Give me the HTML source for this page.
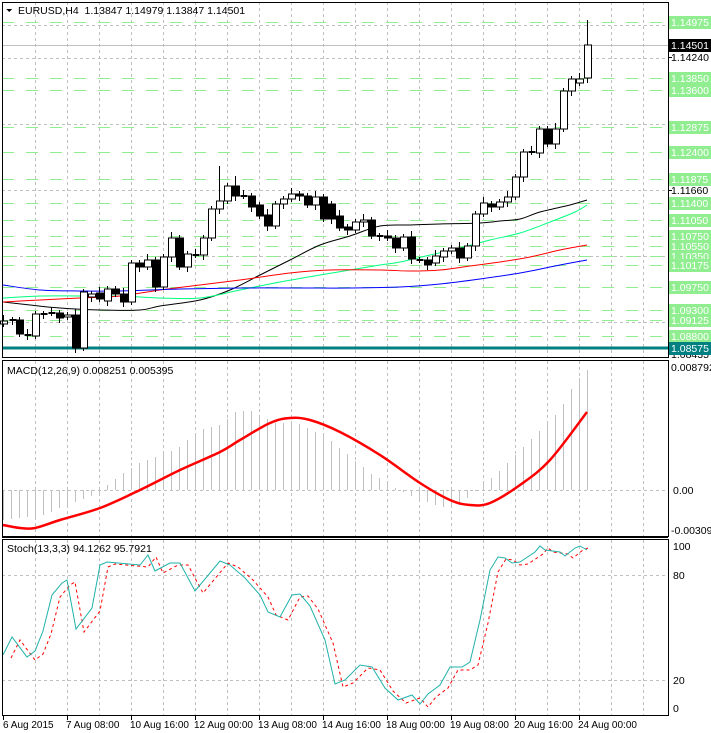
<!DOCTYPE html>
<html><head><meta charset="utf-8"><style>
html,body{margin:0;padding:0;background:#fff;width:711px;height:733px;overflow:hidden}
svg{display:block}
text{font-family:"Liberation Sans",sans-serif;font-size:10.5px}
text.b{font-size:10px}
</style></head><body>
<svg id="s" width="711" height="733" xmlns="http://www.w3.org/2000/svg" shape-rendering="crispEdges">
<rect width="711" height="733" fill="#fff"/>
<g id="g"></g>
</svg>
<script>
var G=document.getElementById('g'),h='';
function L(x1,y1,x2,y2,c,w,d){h+='<line x1="'+x1+'" y1="'+y1+'" x2="'+x2+'" y2="'+y2+'" stroke="'+c+'" stroke-width="'+(w||1)+'"'+(d?' stroke-dasharray="'+d+'"':'')+'/>';}
function P(pts,c,w,d,geo){h+='<polyline fill="none" points="'+pts.map(function(p){return p.join(',')}).join(' ')+'" stroke="'+c+'" stroke-width="'+(w||1)+'"'+(d?' stroke-dasharray="'+d+'"':'')+(geo?' shape-rendering="geometricPrecision"':'')+'/>';}
function S(pts,c,w){var d='M'+pts[0][0]+' '+pts[0][1];for(var i=1;i<pts.length;i++){var p0=pts[i-2]||pts[i-1],p1=pts[i-1],p2=pts[i],p3=pts[i+1]||p2;d+=' C'+(p1[0]+(p2[0]-p0[0])/6)+' '+(p1[1]+(p2[1]-p0[1])/6)+' '+(p2[0]-(p3[0]-p1[0])/6)+' '+(p2[1]-(p3[1]-p1[1])/6)+' '+p2[0]+' '+p2[1];}h+='<path d="'+d+'" fill="none" stroke="'+c+'" stroke-width="'+w+'" shape-rendering="geometricPrecision"/>';}
function T(x,y,s,c,a,cl){h+='<text x="'+x+'" y="'+y+'" fill="'+(c||'#000')+'"'+(a?' text-anchor="'+a+'"':'')+(cl?' class="'+cl+'"':'')+'>'+s+'</text>';}
var vx=[];for(var x=35.5;x<668;x+=32)vx.push(x);
[[2,357],[361,536],[540,715]].forEach(function(p){vx.forEach(function(x){L(x,p[0],x,p[1],'#c0c0c0',1,'3,3');});});
[25,58,124,190,256,322].forEach(function(y){L(2,y+.5,668,y+.5,'#c0c0c0',1,'3,3');});
L(2,490.5,668,490.5,'#c0c0c0',1,'3,3');
[575,680].forEach(function(y){L(2,y+.5,668,y+.5,'#c0c0c0',1,'3,3');});
var lv=[[22,'1.14975'],[78,'1.13850'],[90,'1.13600'],[127,'1.12875'],[152,'1.12400'],[179,'1.11875'],[203,'1.11400'],[220,'1.11050'],[236,'1.10750'],[246,'1.10550'],[256,'1.10350'],[265,'1.10175'],[287,'1.09750'],[310,'1.09300'],[320,'1.09125'],[336,'1.08800']];
lv.forEach(function(l){L(2,l[0]+.5,668,l[0]+.5,'#90ee90',1,'12,12');});
L(2,45.5,668,45.5,'#c0c0c0',1);
S([[3,302],[30,305],[60,308],[100,310],[140,310],[160,306],[200,300],[230,290],[260,275],[290,260],[320,245],[350,236],[380,226],[410,225],[440,224],[480,223],[500,221],[520,219],[540,212],[570,205],[587,200]],'#000',1);
S([[3,298],[40,296],[80,296],[120,296],[160,298],[200,298],[240,290],[280,282],[320,275],[350,270],[380,265],[400,262],[430,255],[460,248],[490,240],[520,233],[550,222],[575,212],[587,205]],'#00ff7f',1);
S([[3,302],[40,300],[80,298],[120,296],[160,290],[200,285],[240,280],[290,273],[330,270],[380,270],[410,271],[440,270],[470,266],[500,262],[530,257],[560,250],[587,245]],'#ff0000',1);
S([[3,285],[40,290],[80,291],[120,291],[180,289],[240,288],[300,288],[350,288],[400,287],[440,284],[480,279],[520,273],[560,265],[587,260]],'#0000ff',1);
L(2,348,668,348,'#008080',3);
var C=[[3,324,321],[12,320,320],[19,320,334],[27,335,335],[35,336,314],[43,314,314],[51,313,313],[59,313,318],[67,317,315],[75,315,348],[83,348,292],[91,297,294],[99,293,299],[107,301,289],[115,289,294],[123,294,302],[131,302,263],[139,263,267],[147,267,260],[155,260,287],[163,287,257],[171,257,238],[179,238,267],[187,267,254],[195,255,255],[203,255,238],[211,238,209],[219,209,201],[227,201,186],[235,186,196],[243,196,196],[251,196,207],[259,205,216],[267,215,226],[275,226,204],[283,204,199],[291,199,194],[299,194,196],[307,196,205],[315,205,197],[323,197,219],[331,204,219],[339,216,228],[347,227,230],[355,230,222],[363,222,220],[371,220,236],[379,236,236],[387,236,238],[395,238,248],[403,248,237],[411,237,259],[419,260,260],[427,260,265],[435,263,256],[443,257,251],[451,251,248],[459,248,258],[467,258,246],[475,246,214],[483,214,203],[491,204,207],[499,207,202],[507,202,197],[515,197,177],[523,177,152],[531,152,152],[539,153,129],[547,129,144],[555,144,129],[563,129,91],[571,91,79],[579,83,79],[587,78,45]];
C.forEach(function(c,i){var x=c[0]+.5,t=Math.min(c[1],c[2]),b=Math.max(c[1],c[2]);var hi=c[3]||t-(i%3==0?6:3),lo=c[4]||b+(i%2?5:3);if(i==C.length-1)hi=20;if(i==27)hi=166;if(i==29)hi=176;
L(x,hi,x,lo,'#000',1);if(b-t<2){L(x-3,t,x+4,t,'#000',2);}else h+='<rect x="'+(x-3)+'" y="'+t+'" width="7" height="'+(b-t)+'" fill="'+(c[2]<c[1]?'#fff':'#000')+'" stroke="#000"/>';});
var HK=[[3,520],[40,516],[80,500],[100,493],[110,482],[140,462],[175,450],[200,430],[220,425],[235,412],[250,411],[275,423],[300,424],[330,440],[350,457],[370,473],[390,485],[402,492],[420,500],[440,507],[460,505],[470,495],[500,470],[530,440],[560,410],[575,382],[587,370]];
function itp(a,x){for(var i=1;i<a.length;i++)if(x<=a[i][0]){var p=a[i-1],q=a[i];return p[1]+(q[1]-p[1])*(x-p[0])/(q[0]-p[0]);}return a[a.length-1][1];}
for(var x=3;x<=587;x+=8){var y=Math.round(itp(HK,x));L(x+.5,490,x+.5,y,'#c0c0c0',1);}
S([[3,525],[20,528],[35,528],[60,520],[100,508],[140,490],[180,470],[220,452],[240,440],[270,423],[290,418],[310,420],[340,432],[380,455],[420,483],[450,500],[470,505],[490,503],[520,485],[550,460],[587,412]],'#ff0000',2.5);
var SK=[[3,655],[12,637],[27,657],[35,651],[43,631],[52,595],[62,583],[67,580],[76,629],[92,608],[100,565],[107,562],[140,565],[148,555],[155,571],[170,563],[180,563],[195,591],[220,561],[230,565],[245,578],[260,595],[268,612],[280,617],[292,595],[300,594],[310,606],[325,640],[335,684],[345,680],[360,665],[372,667],[385,688],[398,700],[412,695],[420,704],[428,694],[440,685],[450,667],[462,667],[470,662],[480,620],[490,570],[498,557],[505,558],[512,563],[520,562],[535,552],[540,546],[545,550],[560,552],[565,556],[575,548],[580,546],[587,550]];
P(SK.map(function(p){return [p[0]+8,p[1]+ (p[1]<600?2:3)]}).filter(function(p){return p[0]<=590}),'#ff0000',1,'3,3',1);
P(SK,'#20b2aa',1,null,1);
h+='<rect x="2.5" y="2.5" width="666" height="355" fill="none" stroke="#000"/>';
h+='<rect x="2.5" y="360.5" width="666" height="176" fill="none" stroke="#000"/>';
h+='<rect x="2.5" y="539.5" width="666" height="176" fill="none" stroke="#000"/>';
L(2,537.5,668,537.5,'#000',1);
h+='<path d="M6 9 L12 9 L9 12 Z" fill="#000"/>';
T(18,14,'EURUSD,H4&#160; 1.13847 1.14979 1.13847 1.14501');
T(7,374,'MACD(12,26,9) 0.008251 0.005395');
T(7,552,'Stoch(13,3,3) 94.1262 95.7921');
T(671,61,'1.14240');T(671,194,'1.11660');T(671,358,'1.08435');
[57,190].forEach(function(y){L(668,y+.5,672,y+.5,'#000');});
lv.forEach(function(l){h+='<rect x="669" y="'+(l[0]-6)+'" width="42" height="13" fill="#90ee90"/>';T(671,l[0]+4,l[1],'#fff');});
h+='<rect x="669" y="39" width="42" height="13" fill="#000"/>';T(671,49,'1.14501','#fff');
h+='<rect x="669" y="342" width="42" height="13" fill="#008080"/>';T(671,352,'1.08575','#fff');
T(671,371,'0.008792');T(673,494,'0.00');T(671,534,'-0.003098');
T(673,550,'100');T(673,579,'80');T(673,684,'20');T(673,712,'0');
var BL=['6 Aug 2015','7 Aug 08:00','10 Aug 16:00','12 Aug 00:00','13 Aug 08:00','14 Aug 16:00','18 Aug 00:00','19 Aug 08:00','20 Aug 16:00','24 Aug 00:00'];
BL.forEach(function(s,i){var x=i==0?3:67+64*(i-1);L(x+.5,716,x+.5,720,'#000');T(i==0?3:x-1,728,s,'#000',null,'b');});
G.innerHTML=h;
</script>
</body></html>
